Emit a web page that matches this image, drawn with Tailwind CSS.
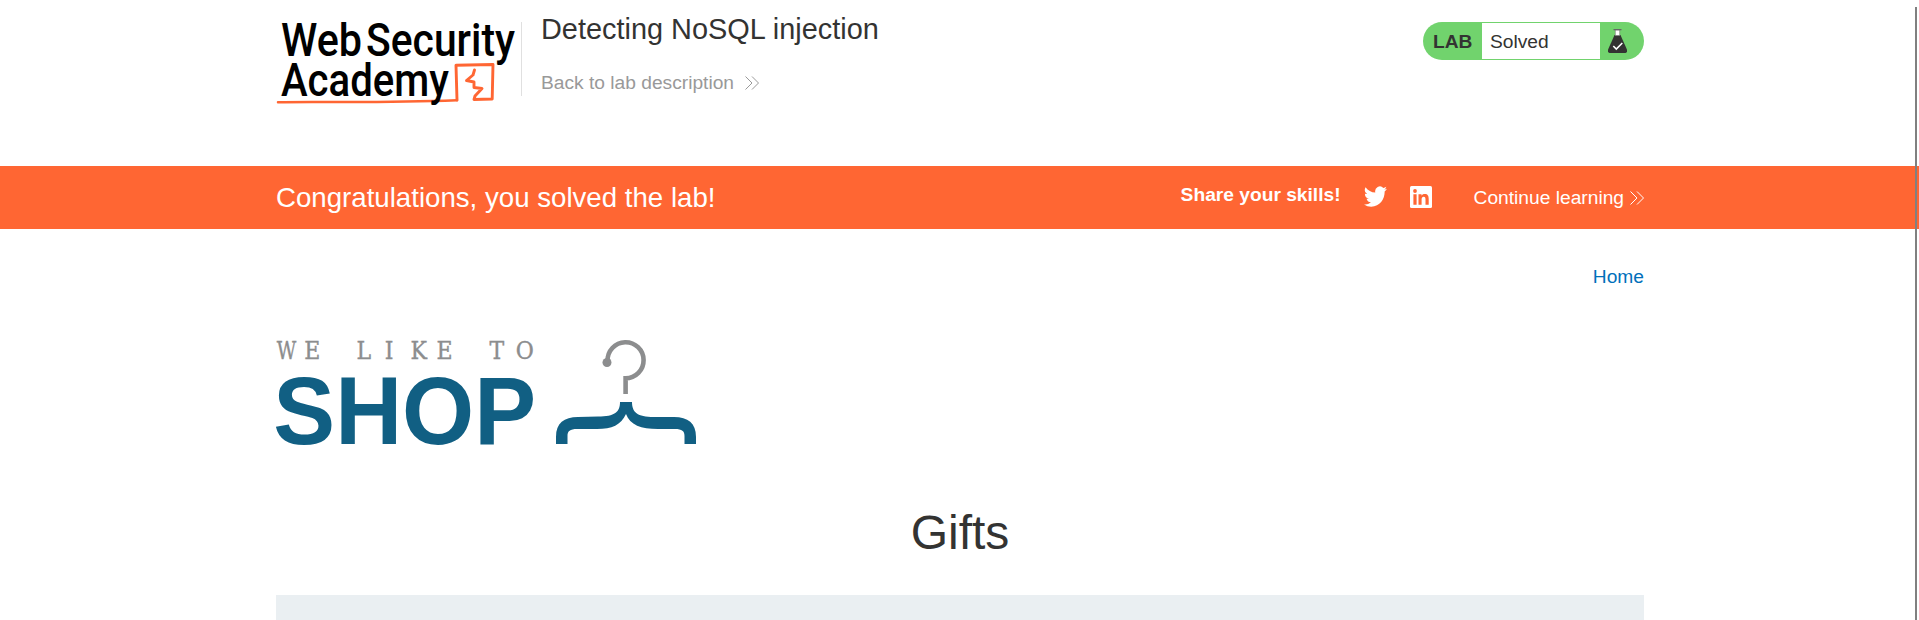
<!DOCTYPE html>
<html lang="en">
<head>
<meta charset="utf-8">
<title>Detecting NoSQL injection</title>
<script src="https://cdn.jsdelivr.net/npm/@tailwindcss/browser@4"></script>
</head>
<body class="relative h-[620px] overflow-hidden bg-white font-['Liberation_Sans',Arial,sans-serif] text-[19.2px] leading-6 text-[#333332]">
<header class="ml-[276px] flex h-[166px] w-[1368px] items-start">
  <svg class="h-[120px] w-[245px] shrink-0" viewBox="276 0 245 120" aria-label="Web Security Academy">
    <g fill="none" stroke="#ff6633" stroke-linecap="round" stroke-linejoin="round">
      <path d="M278 102.300C310 101 370 103.500 457 100.200" stroke-width="2.500"/>
      <path d="M457 100L456 65.300L493 64.500L492.200 99L474 99.500L475 96L482 88.500L474 87.500L474 82L466.500 80.500L473 75L474.500 70" stroke-width="2.900"/>
    </g>
    <g fill="#000" font-family="Roboto, sans-serif" font-weight="500" font-size="46">
      <text x="281" y="56" textLength="81" lengthAdjust="spacingAndGlyphs">Web</text>
      <text x="366" y="56" textLength="149" lengthAdjust="spacingAndGlyphs">Security</text>
      <text x="281" y="95.500" textLength="168" lengthAdjust="spacingAndGlyphs">Academy</text>
    </g>
  </svg>
  <div class="mt-[22px] h-[74px] w-px bg-[#e0e0e0]"></div>
  <div class="pt-[13px] pl-[19px]">
    <h1 class="text-[28.9px] leading-8">Detecting NoSQL injection</h1>
    <a class="mt-[26px] flex items-center gap-[11px] text-[#999]">Back to lab description
      <svg class="-mt-px size-[14px]" viewBox="0 0 14 14" fill="none" stroke="currentColor" stroke-width="1"><path d="M.5.5L7 7L.5 13.500M7 .5L13.500 7L7 13.500"/></svg>
    </a>
  </div>
  <div class="mt-[22px] ml-auto flex h-[38px] w-[221px] items-center overflow-hidden rounded-full bg-[#71d36d]">
    <span class="w-[59px] pt-px pl-[10px] font-bold">LAB</span>
    <span class="h-9 w-[118px] bg-white pl-[8px] leading-[37px]">Solved</span>
    <svg class="ml-2 h-6 w-[19px]" viewBox="0 0 19 24"><path d="M6.500 6H12.500L18.900 20.500Q19.500 24 17.500 24H1.500Q-.5 24 .1 20.500Z" fill="#333332"/><path d="M7.300 1h4.400v5.500H7.300z" fill="#fff" stroke="#777" stroke-width=".6"/><path d="M5.500 .6h8" stroke="#666" stroke-width="1.200"/><path d="M5.300 17l3 3l6-6" fill="none" stroke="#fff" stroke-width="1.600"/></svg>
  </div>
</header>

<section class="flex h-[63px] items-start bg-[#ff6633] pl-[276px] text-white">
  <div class="flex w-[1368px] items-start">
    <p class="pt-[16px] text-[27.65px] leading-8 whitespace-nowrap">Congratulations, you solved the lab!</p>
    <span class="mt-[17px] ml-auto font-bold whitespace-nowrap">Share your skills!</span>
    <svg class="mt-[20px] ml-[23px] h-[21px] w-[23px]" viewBox="0 2 24 20" preserveAspectRatio="none" fill="#fff"><path d="M23.950 4.570a10 10 0 0 1-2.820.78 4.960 4.960 0 0 0 2.160-2.730c-.95.56-2 .96-3.120 1.190a4.920 4.920 0 0 0-8.380 4.480C7.690 8.090 4.070 6.130 1.640 3.160a4.930 4.930 0 0 0 1.520 6.570 4.900 4.900 0 0 1-2.230-.61v.06a4.920 4.920 0 0 0 3.950 4.830 5 5 0 0 1-2.210.08 4.940 4.940 0 0 0 4.600 3.420A9.870 9.870 0 0 1 0 19.540a13.990 13.990 0 0 0 7.550 2.210c9.050 0 14-7.500 14-13.980 0-.21 0-.42-.02-.63a9.940 9.940 0 0 0 2.420-2.570z"/></svg>
    <svg class="mt-[20px] ml-[23px] size-[22px]" viewBox="0 0 22 22"><rect width="22" height="22" rx="1.500" fill="#fff"/><g fill="#ff6633"><circle cx="5" cy="5" r="1.900"/><path d="M3.400 8.300h3.200V18.800H3.400zM8.500 8.300h3V9.700C12 8.700 13.200 8 14.700 8C17.900 8 18.700 10 18.700 13V18.800H15.500V13.500C15.500 12 15.200 10.800 13.700 10.800C12 10.800 11.600 12.200 11.600 13.700V18.800h-3.100z"/></g></svg>
    <a class="mt-[20px] ml-[42px] flex items-center gap-[6px] whitespace-nowrap">Continue learning
      <svg class="-mt-px size-[14px]" viewBox="0 0 14 14" fill="none" stroke="currentColor" stroke-width="1"><path d="M.5.5L7 7L.5 13.500M7 .5L13.500 7L7 13.500"/></svg>
    </a>
  </div>
</section>

<main class="ml-[276px] w-[1368px]">
  <nav class="flex h-[96px] justify-end pt-[36px]"><a class="text-[#0070bb]">Home</a></nav>
  <svg class="h-[130px] w-[434px]" viewBox="276 325 434 130" aria-label="We like to shop">
    <g fill="#8c8d8e" stroke="#8c8d8e" stroke-width=".4" font-family="DejaVu Serif, serif" font-size="24.500">
      <text x="276.800" y="359" textLength="19.500" lengthAdjust="spacingAndGlyphs">W</text>
      <text transform="scale(.9 1)" y="359" x="338 396 427.500 456 485 544 573">ELIKETO</text>
    </g>
    <text x="273.300" y="444" textLength="262.800" lengthAdjust="spacingAndGlyphs" fill="#115f83" font-family="Liberation Sans, Arial, sans-serif" font-weight="700" font-size="96">SHOP</text>
    <circle cx="607" cy="362.500" r="4.500" fill="#8c8d8e"/>
    <path d="M607.600 361A18 18 0 1 1 625.600 378.200V394" fill="none" stroke="#8c8d8e" stroke-width="4.600"/>
    <path d="M620 402H632C632 412 637 417 654 417H674C688 417 696 423 696 437V444H684.500V436C684.500 431 682 429 675 429H658C641 429 630 425 626 414C621 425 612 429 597 429H577C570 429 567.500 431 567.500 436V444H556V437C556 423 564 417 578 417L598 416.500C615 416.500 620 412 620 402Z" fill="#115f83"/>
  </svg>
  <h2 class="mt-[48px] text-center text-[48px] leading-[60px]">Gifts</h2>
  <div class="mt-[32px] h-[25px] bg-[#eaeff2]"></div>
</main>
<div class="absolute top-[7px] left-[1915px] h-[613px] w-[2px] bg-[#808080]"></div>
</body>
</html>
